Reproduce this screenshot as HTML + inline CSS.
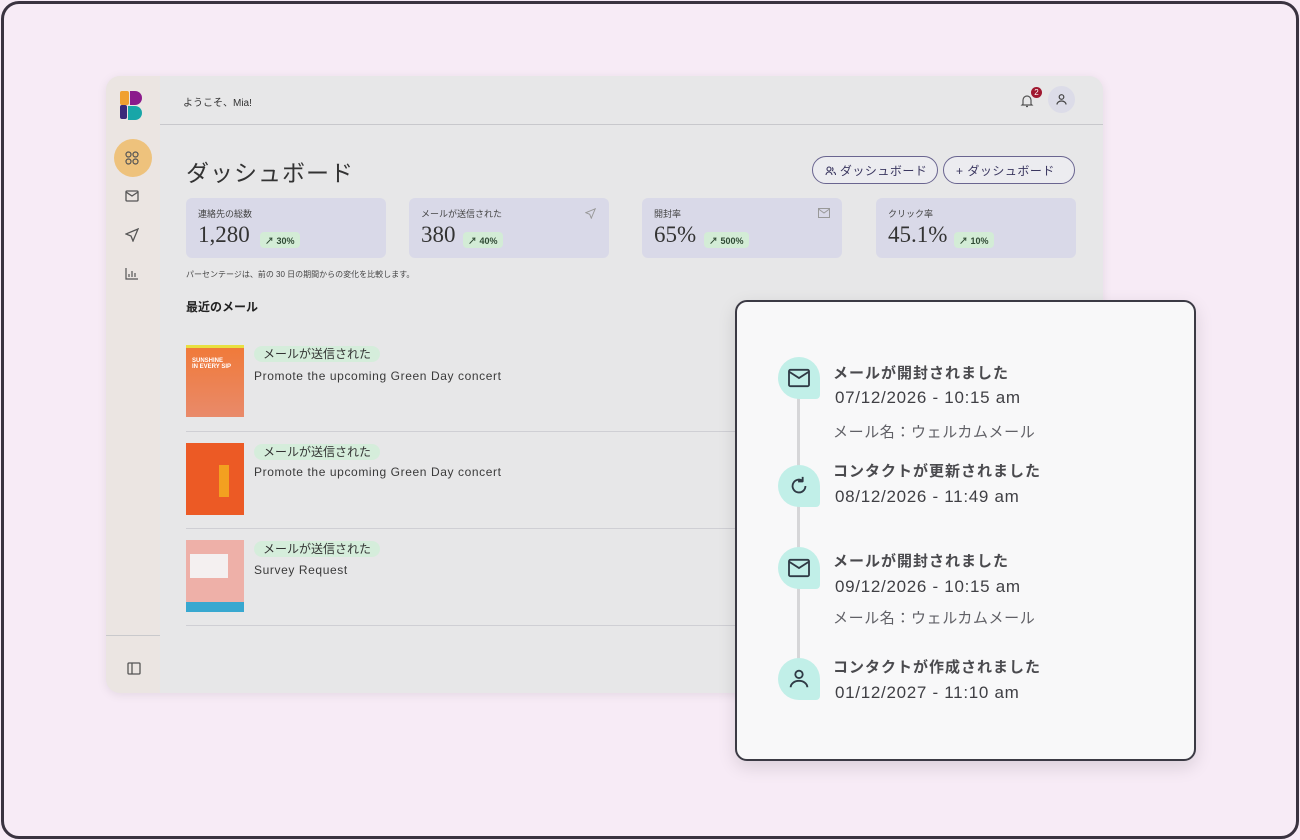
<!DOCTYPE html>
<html><head><meta charset="utf-8"><style>
*{box-sizing:border-box;margin:0;padding:0}
body{width:1300px;height:840px;overflow:hidden;background:#f7ebf6;font-family:"Liberation Sans","Noto Sans CJK JP",sans-serif;color:#2c2c33;position:relative}
.frame{position:absolute;left:1px;top:1px;width:1298px;height:838px;border:3px solid #3a3340;border-radius:18px}
.win{position:absolute;left:106px;top:76px;width:997px;height:617px;background:#e7e7e8;border-radius:14px 14px 0 14px;overflow:hidden;box-shadow:0 2px 10px rgba(0,0,0,.08)}
.side{position:absolute;left:0;top:0;width:54px;height:617px;background:#ebe5e2}
.abs{position:absolute}
.card{position:absolute;top:122px;width:200px;height:60px;background:#d9d9e8;border-radius:6px}
.card .l{position:absolute;left:12px;top:9px;font-size:9px;color:#444}
.card .v{position:absolute;left:12px;top:24px;font-family:"Liberation Serif","Noto Serif CJK SC",serif;font-size:23px;color:#333}
.pill{position:absolute;top:34px;height:16px;background:#d3ecd6;border-radius:4px;font-size:9px;font-weight:bold;color:#2f4a34;padding:2px 5px}
.btn{position:absolute;top:80px;height:28px;border:1.5px solid #6a6590;border-radius:14px;font-size:12px;color:#3b3760;padding:5px 0 0 12px;background:#ececf0;letter-spacing:.5px}
.row{position:absolute;left:80px;width:920px;border-bottom:1px solid #cfcfd4}
.tag{position:absolute;left:68px;background:#d5eddb;border-radius:8px;font-size:12px;color:#333;padding:0 9px;height:16px;line-height:16px}
.ttl{position:absolute;left:68px;font-size:12px;color:#3a3a3a;letter-spacing:.6px}
.pop{position:absolute;left:735px;top:300px;width:461px;height:461px;background:#f8f8f9;border:2px solid #3b3a44;border-radius:12px;box-shadow:0 6px 18px rgba(0,0,0,.12)}
.bub{position:absolute;left:41px;width:42px;height:42px;background:#c1efe8;border-radius:21px 21px 4px 21px;display:flex;align-items:center;justify-content:center}
.h{position:absolute;left:96px;font-size:15px;font-weight:bold;color:#4a4a4e;letter-spacing:1px}
.d{position:absolute;left:98px;font-size:17px;color:#3f3f44;letter-spacing:.7px}
.n{position:absolute;left:96px;font-size:15px;color:#606066;letter-spacing:.6px}
</style></head><body>
<div class="frame"></div>
<div class="win">
  <div class="side">
    <svg class="abs" style="left:14px;top:15px" width="24" height="29" viewBox="0 0 24 29"><rect x="0" y="0" width="9" height="14" fill="#f0a030" rx="2"/><path d="M10 0h5a7 7 0 0 1 0 14h-5z" fill="#8b1a8c"/><rect x="0" y="14" width="7" height="14" fill="#3a2a7a" rx="2"/><path d="M8 15h7a7 7 0 0 1 0 14h-7z" fill="#18a6a8"/></svg>
    <div class="abs" style="left:8px;top:63px;width:38px;height:38px;border-radius:19px;background:#eec27c"></div>
    <svg class="abs" style="left:19px;top:75px" width="14" height="14" viewBox="0 0 14 14" fill="none" stroke="#555" stroke-width="1.2"><circle cx="3.5" cy="3.5" r="2.5"/><circle cx="10.5" cy="3.5" r="2.5"/><circle cx="3.5" cy="10.5" r="2.5"/><circle cx="10.5" cy="10.5" r="2.5"/></svg>
    <svg class="abs" style="left:19px;top:114px" width="14" height="12" viewBox="0 0 14 12" fill="none" stroke="#555" stroke-width="1.3"><rect x="1" y="1" width="12" height="10" rx="1"/><path d="M1 2l6 4 6-4"/></svg>
    <svg class="abs" style="left:19px;top:152px" width="14" height="14" viewBox="0 0 14 14" fill="none" stroke="#555" stroke-width="1.3"><path d="M13 1L1 6l5 2 2 5z"/></svg>
    <svg class="abs" style="left:19px;top:191px" width="14" height="13" viewBox="0 0 14 13" fill="none" stroke="#555" stroke-width="1.2"><path d="M1 1v11h12M4 10V7M7 10V4M10 10V6"/></svg>
    <div class="abs" style="left:0;top:559px;width:54px;height:1px;background:#c9c9cc"></div>
    <svg class="abs" style="left:21px;top:586px" width="14" height="13" viewBox="0 0 14 13" fill="none" stroke="#555" stroke-width="1.3"><rect x="1" y="1" width="12" height="11" rx="1"/><path d="M5 1v11"/></svg>
  </div>
  <div class="abs" style="left:77px;top:18px;font-size:10px;color:#333">ようこそ、Mia!</div>
  <div class="abs" style="left:54px;top:48px;width:943px;height:1px;background:#c8c8cc"></div>
  <svg class="abs" style="left:914px;top:17px" width="14" height="15" viewBox="0 0 14 15" fill="none" stroke="#555" stroke-width="1.2"><path d="M3 11V7a4 4 0 0 1 8 0v4l1 1H2zM6 13.5h2"/></svg>
  <div class="abs" style="left:925px;top:11px;width:11px;height:11px;border-radius:6px;background:#a01830;color:#fff;font-size:8px;text-align:center;line-height:11px">2</div>
  <div class="abs" style="left:942px;top:10px;width:27px;height:27px;border-radius:14px;background:#dcdce8"></div>
  <svg class="abs" style="left:949px;top:17px" width="13" height="13" viewBox="0 0 13 13" fill="none" stroke="#444" stroke-width="1.2"><circle cx="6.5" cy="4" r="2.3"/><path d="M2 11.5a4.5 3.5 0 0 1 9 0"/></svg>
  <div class="abs" style="left:80px;top:78px;font-size:23px;color:#333;letter-spacing:1px">ダッシュボード</div>
  <div class="btn" style="left:706px;width:126px"><svg width="11" height="10" viewBox="0 0 11 10" fill="none" stroke="#3b3760" stroke-width="1.1" style="vertical-align:-1px"><circle cx="4" cy="3" r="2"/><path d="M1 9a3 3 0 0 1 6 0M7 1.5a2 2 0 0 1 0 3.5M8.5 6a3 3 0 0 1 2 3"/></svg> ダッシュボード</div>
  <div class="btn" style="left:837px;width:132px">+ ダッシュボード</div>
  <div class="card" style="left:80px"><div class="l">連絡先の総数</div><div class="v">1,280</div><div class="pill" style="left:74px">↗ 30%</div></div>
  <div class="card" style="left:303px"><div class="l">メールが送信された</div><div class="v">380</div><div class="pill" style="left:54px">↗ 40%</div><svg class="abs" style="left:176px;top:10px" width="11" height="11" viewBox="0 0 14 14" fill="none" stroke="#999" stroke-width="1.2"><path d="M13 1L1 6l5 2 2 5z"/></svg></div>
  <div class="card" style="left:536px"><div class="l">開封率</div><div class="v">65%</div><div class="pill" style="left:62px">↗ 500%</div><svg class="abs" style="left:176px;top:10px" width="12" height="10" viewBox="0 0 12 10" fill="none" stroke="#999" stroke-width="1"><rect x=".5" y=".5" width="11" height="9"/><path d="M.5 1l5.5 4 5.5-4"/></svg></div>
  <div class="card" style="left:770px"><div class="l">クリック率</div><div class="v">45.1%</div><div class="pill" style="left:78px">↗ 10%</div></div>
  <div class="abs" style="left:80px;top:193px;font-size:8px;color:#444">パーセンテージは、前の 30 日の期間からの変化を比較します。</div>
  <div class="abs" style="left:80px;top:222px;font-size:12px;font-weight:bold;color:#222">最近のメール</div>
  <div class="row" style="top:264px;height:92px">
    <div class="abs" style="left:0;top:5px;width:58px;height:72px;background:linear-gradient(#f07a3a,#e98a6a);border-top:3px solid #e8e040"><div style="margin:10px 0 0 6px;font-size:6px;color:#fff;font-weight:bold">SUNSHINE<br>IN EVERY SIP</div></div>
    <div class="tag" style="top:6px">メールが送信された</div><div class="ttl" style="top:29px">Promote the upcoming Green Day concert</div>
  </div>
  <div class="row" style="top:356px;height:97px">
    <div class="abs" style="left:0;top:11px;width:58px;height:72px;background:#ec5a25"><div style="position:absolute;left:33px;top:22px;width:10px;height:32px;background:#f3a020"></div></div>
    <div class="tag" style="top:12px">メールが送信された</div><div class="ttl" style="top:33px">Promote the upcoming Green Day concert</div>
  </div>
  <div class="row" style="top:453px;height:97px">
    <div class="abs" style="left:0;top:11px;width:58px;height:72px;background:#eeb0a8"><div style="position:absolute;left:4px;top:14px;width:38px;height:24px;background:#f4f0f0"></div><div style="position:absolute;left:0;bottom:0;width:58px;height:10px;background:#38a8d0"></div></div>
    <div class="tag" style="top:12px">メールが送信された</div><div class="ttl" style="top:34px">Survey Request</div>
  </div>
</div>
<div class="pop">
  <div class="abs" style="left:60px;top:70px;width:3px;height:300px;background:#d6d6d8"></div>
  <div class="bub" style="top:55px"><svg width="24" height="20" viewBox="0 0 26 22" fill="none" stroke="#2f3a45" stroke-width="2"><rect x="2" y="2" width="22" height="18" rx="1.5"/><path d="M2 4l11 7 11-7"/></svg></div>
  <div class="h" style="top:60px">メールが開封されました</div>
  <div class="d" style="top:86px">07/12/2026 - 10:15 am</div>
  <div class="n" style="top:119px">メール名：ウェルカムメール</div>
  <div class="bub" style="top:163px"><svg width="22" height="22" viewBox="0 0 24 24" fill="none" stroke="#2f3a45" stroke-width="2"><path d="M19 12a7 7 0 1 1-3-5.7"/><path d="M16 2v5h-5" stroke-linejoin="round"/></svg></div>
  <div class="h" style="top:158px">コンタクトが更新されました</div>
  <div class="d" style="top:185px">08/12/2026 - 11:49 am</div>
  <div class="bub" style="top:245px"><svg width="24" height="20" viewBox="0 0 26 22" fill="none" stroke="#2f3a45" stroke-width="2"><rect x="2" y="2" width="22" height="18" rx="1.5"/><path d="M2 4l11 7 11-7"/></svg></div>
  <div class="h" style="top:248px">メールが開封されました</div>
  <div class="d" style="top:275px">09/12/2026 - 10:15 am</div>
  <div class="n" style="top:305px">メール名：ウェルカムメール</div>
  <div class="bub" style="top:356px"><svg width="24" height="24" viewBox="0 0 26 26" fill="none" stroke="#2f3a45" stroke-width="2"><circle cx="13" cy="8" r="4"/><path d="M4 22a9 7 0 0 1 18 0"/></svg></div>
  <div class="h" style="top:354px">コンタクトが作成されました</div>
  <div class="d" style="top:381px">01/12/2027 - 11:10 am</div>
</div>
</body></html>
